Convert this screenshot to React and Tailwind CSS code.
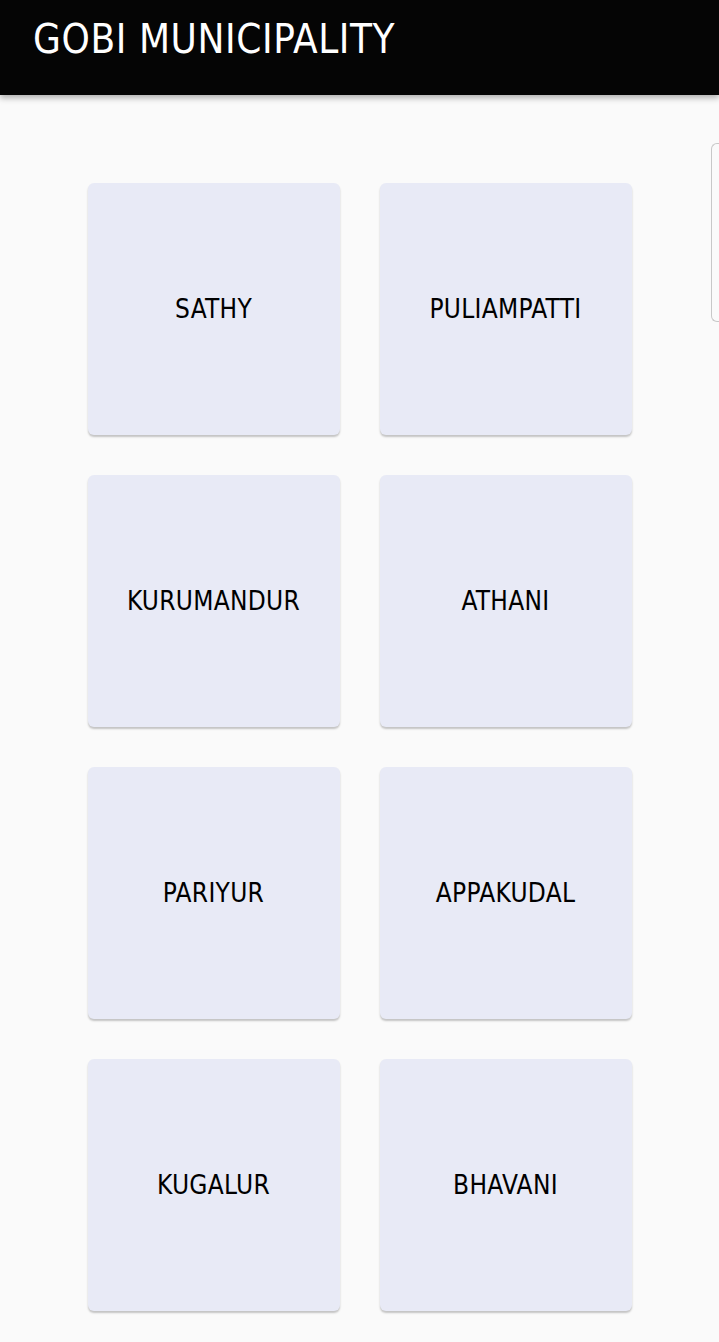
import React from 'react';

const places = ['SATHY', 'PULIAMPATTI', 'KURUMANDUR', 'ATHANI', 'PARIYUR', 'APPAKUDAL', 'KUGALUR', 'BHAVANI'];

const font = { fontFamily: '"DejaVu Sans Condensed", "Liberation Sans Narrow", sans-serif' };

export default function App() {
  return (
    <div className="relative min-h-[1342px] bg-[#fafafa]" style={font}>
      <header className="relative z-10 flex h-[95px] items-start bg-[#050505] px-[33px] pt-[13px] shadow-[0_3px_6px_rgba(0,0,0,0.3)]">
        <h1 className="text-[40px] leading-[52px] tracking-[0.6px] text-white">GOBI MUNICIPALITY</h1>
      </header>

      <main className="grid grid-cols-[252px_252px] justify-center gap-10 pt-[88px] pb-[31px]">
        {places.map((name) => (
          <button
            key={name}
            className="flex h-[252px] items-center justify-center rounded-md bg-[#e8eaf6] shadow-[0_2px_2px_rgba(0,0,0,0.22)]"
          >
            <span className="text-[26px] leading-none tracking-[0.3px] text-black">{name}</span>
          </button>
        ))}
      </main>

      <div className="absolute right-0 top-[143px] h-[179px] w-[8px] rounded-l-md border border-r-0 border-[#c8c8c8] bg-[#fafafa]" />
    </div>
  );
}
